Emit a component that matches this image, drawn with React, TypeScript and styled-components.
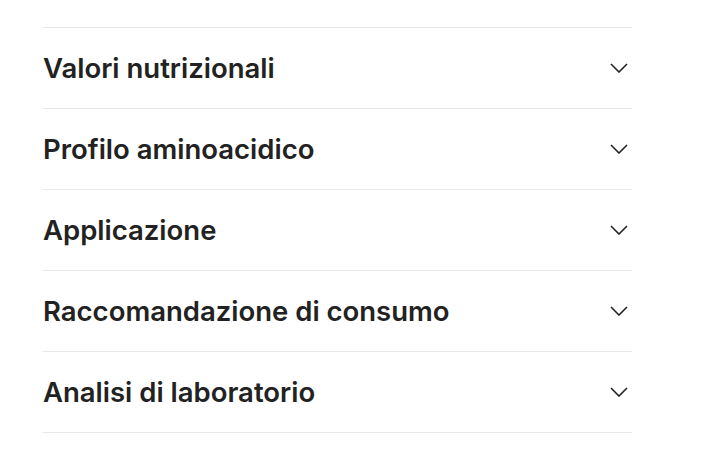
import React from 'react';
import styled, { createGlobalStyle } from 'styled-components';

const GlobalStyle = createGlobalStyle`
  body {
    margin: 0;
    background: #ffffff;
    font-family: Inter, "Noto Sans", sans-serif;
  }
`;

const Page = styled.div`
  padding: 27px 90px 0 43px;
`;

const List = styled.div`
  width: 589px;
  border-top: 1px solid #e9e9e9;
`;

const Row = styled.div`
  display: flex;
  align-items: center;
  justify-content: space-between;
  height: 80px;
  border-bottom: 1px solid #e9e9e9;
`;

const Title = styled.span`
  font-size: 27.5px;
  font-weight: 600;
  color: #222222;
  line-height: 1;
  margin-top: 2px;
`;

const IconBox = styled.span`
  display: flex;
  margin-right: 4px;
`;

const Chevron = () => (
  <svg width="18" height="10" viewBox="0 0 18 10" fill="none">
    <path d="M1 1l8 8 8-8" stroke="#222" strokeWidth="1.6" />
  </svg>
);

const items = [
  'Valori nutrizionali',
  'Profilo aminoacidico',
  'Applicazione',
  'Raccomandazione di consumo',
  'Analisi di laboratorio',
];

export default function App() {
  return (
    <>
      <GlobalStyle />
      <Page>
        <List>
          {items.map((label) => (
            <Row key={label}>
              <Title>{label}</Title>
              <IconBox>
                <Chevron />
              </IconBox>
            </Row>
          ))}
        </List>
      </Page>
    </>
  );
}
